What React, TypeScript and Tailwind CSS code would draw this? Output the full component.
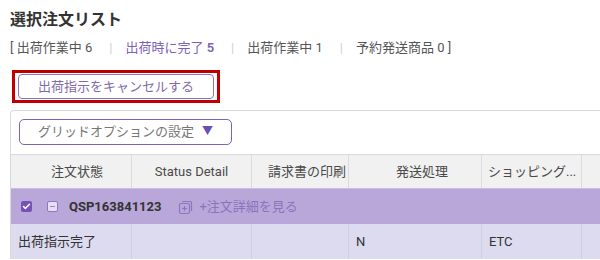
import { Check, Minus } from 'lucide-react';

const cols = [
  { label: '注文状態', w: 'w-[121px]', align: 'justify-center pl-[12px]' },
  { label: 'Status Detail', w: 'w-[120px]', align: 'justify-center' },
  { label: '請求書の印刷', w: 'w-[97px]', align: 'justify-center pl-[14px]' },
  { label: '発送処理', w: 'w-[133px]', align: 'justify-center pl-[14px]' },
  { label: 'ショッピング...', w: 'w-[100px]', align: 'justify-start pl-[6px]' },
];

const row = ['出荷指示完了', '', '', 'N', 'ETC'];

function Stat({ label, count, active }: { label: string; count: number; active?: boolean }) {
  return (
    <span className={active ? 'text-[#7b62b3]' : 'text-[#555]'}>
      {label} <span className={active ? 'font-semibold' : ''}>{count}</span>
    </span>
  );
}

function Sep() {
  return <span className="ml-[17px] mr-[13px] text-[#d0d0d0]">|</span>;
}

function DetailIcon() {
  return (
    <svg width="16" height="16" viewBox="0 0 16 16" fill="none" stroke="#8d76bf" strokeWidth="1.2">
      <path d="M4 2.5h8.5a1 1 0 0 1 1 1V12" />
      <rect x="1.5" y="4.5" width="10" height="10" rx="1.5" />
      <path d="M6.5 7v5M4 9.5h5" />
    </svg>
  );
}

export default function App() {
  return (
    <div className="h-[260px] w-[600px] overflow-hidden bg-white pl-[10px] font-['Roboto','Noto_Sans_CJK_JP',sans-serif]">
      <h1 className="pt-[9px] text-[16px] font-bold leading-[22px] text-[#333]">選択注文リスト</h1>
      <p className="mt-[8px] text-[13px] leading-[18px] text-[#555]">
        [ <Stat label="出荷作業中" count={6} />
        <Sep />
        <Stat label="出荷時に完了" count={5} active />
        <Sep />
        <Stat label="出荷作業中" count={1} />
        <Sep />
        <Stat label="予約発送商品" count={0} /> ]
      </p>

      <div className="mt-[13px] ml-[2px] inline-block border-[3px] border-[#c00000] px-[3px] py-[1px]">
        <button className="flex h-[25px] w-[196px] items-center justify-center rounded-[4px] border border-[#8a74c0] text-[13px] text-[#7f6ba8]">
          出荷指示をキャンセルする
        </button>
      </div>

      <div className="mt-[7px] rounded-tl-[4px] border-l border-t border-[#d9d9d9]">
        <div className="px-[8px] pt-[8px] pb-[9px]">
          <button className="flex h-[26px] w-[213px] items-center justify-center gap-[8px] rounded-[5px] border border-[#7d63b5] text-[13px] text-[#777]">
            グリッドオプションの設定
            <span className="text-[11px] text-[#6a4fb0]">▼</span>
          </button>
        </div>

        <div className="flex h-[34px] border-t border-[#d9d9d9] bg-[#f1f1f1] text-[13px] text-[#4a4a4a]">
          {cols.map((c) => (
            <div key={c.label} className={`flex items-center border-r border-[#dcdcdc] ${c.w} ${c.align}`}>
              {c.label}
            </div>
          ))}
          <div className="flex-1" />
        </div>

        <div className="flex h-[36px] items-center border-t border-[#c9bde3] bg-[#b9a7d9] text-[13px]">
          <span className="ml-[10px] flex h-[11px] w-[11px] items-center justify-center rounded-[2px] bg-[#7651b8]">
            <Check size={9} strokeWidth={4} color="white" />
          </span>
          <span className="ml-[15px] flex h-[11px] w-[11px] items-center justify-center rounded-[2px] border border-[#8f76c4] bg-[#e6def5]">
            <Minus size={7} strokeWidth={3} color="#8f76c4" />
          </span>
          <span className="ml-[11px] font-bold text-[#333]">QSP163841123</span>
          <span className="ml-[17px] flex items-center">
            <DetailIcon />
          </span>
          <span className="ml-[5px] text-[#8b74be]">+注文詳細を見る</span>
        </div>

        <div className="flex h-[35px] bg-[#dcdbf0] text-[13px] text-[#333]">
          {cols.map((c, i) => (
            <div key={c.label} className={`flex items-center border-r border-[#cfcfe0] pl-[7px] ${c.w}`}>
              {row[i]}
            </div>
          ))}
          <div className="flex-1" />
        </div>
      </div>
    </div>
  );
}
